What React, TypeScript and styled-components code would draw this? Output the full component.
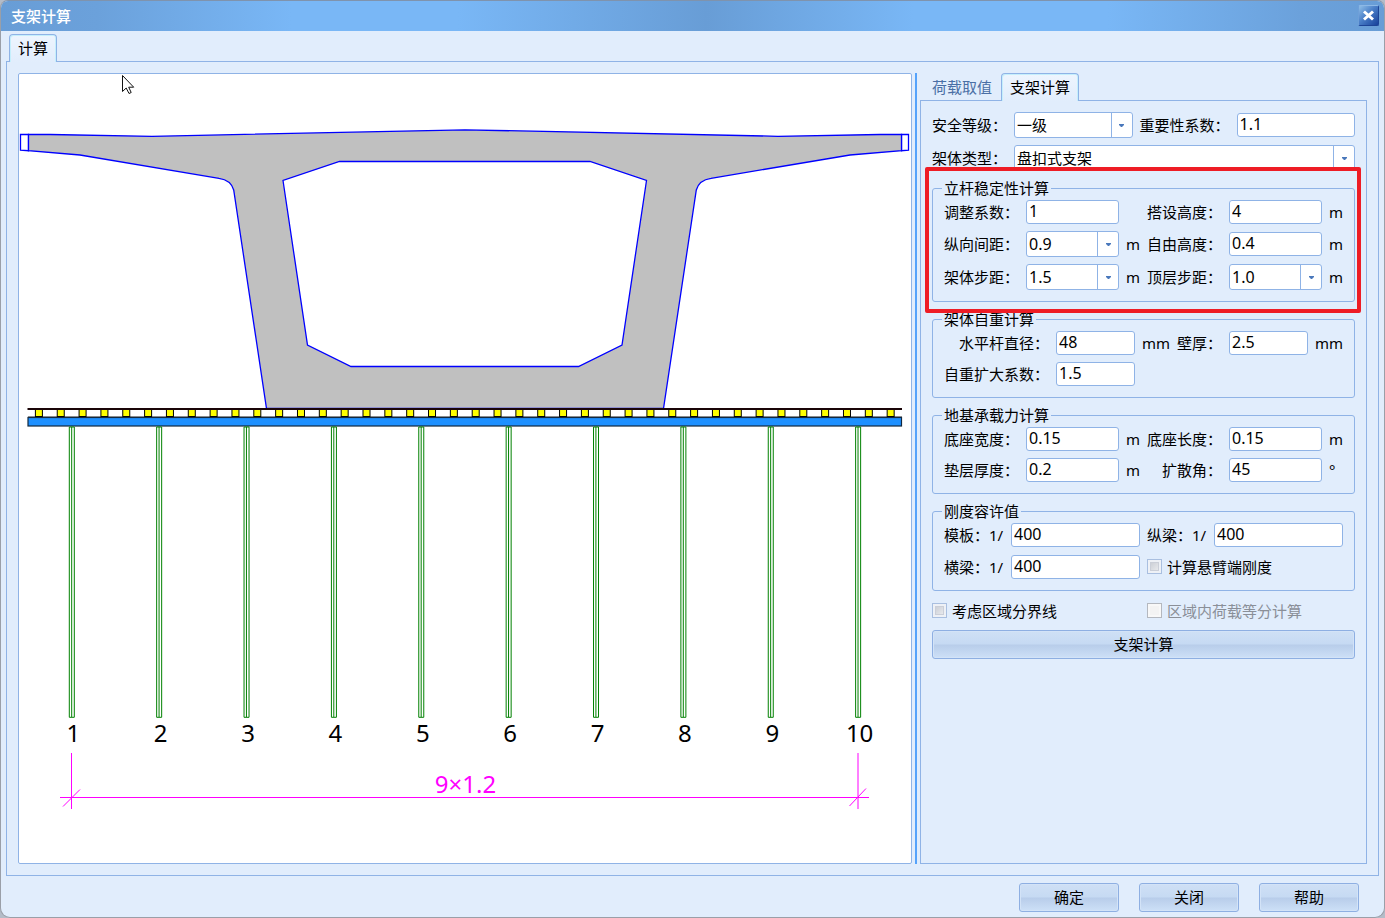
import React, { useState } from "react";
import styled, { createGlobalStyle, css } from "styled-components";

const line = "#8fb3e6";
const surface = "#e1edfc";
const uiFont = `"Noto Sans", "Noto Sans CJK SC", sans-serif`;

const GlobalStyle = createGlobalStyle`
  *, *::before, *::after { box-sizing: border-box; }
  body { margin: 0; background: #b4bcc8; }
  body, button, input, select { font-family: ${uiFont}; font-size: 15px; line-height: 20px; color: #000; }
`;

const Window = styled.div`
  display: flex;
  flex-direction: column;
  min-height: 100vh;
  border: 1px solid #9a9fa8;
  border-top-color: #7f93ad;
  border-radius: 8px 8px 10px 10px;
  background: ${surface};
  overflow: hidden;
`;

const TitleBar = styled.header`
  display: flex;
  align-items: center;
  justify-content: space-between;
  height: 30px;
  padding: 0 5px 1px 10px;
  background: linear-gradient(90deg, #689dd6 0%, #6ba1db 7%, #79b7f6 21%, #79b7f6 33%, #689dd6 51%, #79b7f6 66%, #79b7f6 80%, #6ba1db 94%, #689dd6 100%);
`;

const Title = styled.h1`
  margin: 0;
  font-size: 15px;
  font-weight: 500;
  line-height: 20px;
  color: #fff;
`;

const CloseButton = styled.button`
  display: flex;
  align-items: center;
  justify-content: center;
  width: 21px;
  height: 21px;
  padding: 0;
  border: 1px solid #1d4496;
  border-top-color: #8db8e6;
  border-left-color: #6f9fd8;
  border-radius: 2px;
  background: linear-gradient(135deg, #8fbfe8 0%, #4a7fc8 45%, #17409a 100%);
`;

const TabStrip = styled.div`
  position: relative;
  z-index: 1;
  display: flex;
  align-items: flex-end;
  margin-bottom: -1px;
  padding-left: 3px;
`;

const Tab = styled.button<{ $active?: boolean }>`
  height: 28px;
  padding: 0 8px 2px;
  border: 1px solid transparent;
  border-bottom: 0;
  border-radius: 4px 4px 0 0;
  background: none;
  color: #4a6fa5;
  ${(p) =>
    p.$active &&
    css`
      border-color: ${line};
      background: linear-gradient(#eef5fe, ${surface});
      box-shadow: inset 1px 1px 0 #c5effc, inset -1px 0 0 #c5effc;
      color: #000;
    `}
`;

const Main = styled.main`
  display: flex;
  flex: 1;
  flex-direction: column;
  padding: 3px 5px 7px;
`;

const Workspace = styled.div`
  display: flex;
  flex: 1;
  padding: 11px;
  border: 1px solid ${line};
`;

const Canvas = styled.div`
  display: flex;
  flex: 1;
  min-width: 0;
  border: 1px solid ${line};
  border-radius: 2px;
  background: #fff;
`;

const Drawing = styled.svg`
  display: block;
  width: 100%;
  height: auto;
  font-family: ${uiFont};
  font-size: 24px;
`;

const Splitter = styled.div`
  width: 2px;
  margin: 0 3px;
  background: #55a3fb;
`;

const Side = styled.section`
  display: flex;
  flex: 0 0 447px;
  flex-direction: column;
`;

const Form = styled.form`
  display: flex;
  flex: 1;
  flex-direction: column;
  gap: 7px;
  padding: 11px;
  border: 1px solid ${line};
`;

const Group = styled.fieldset`
  display: flex;
  flex-direction: column;
  min-width: 0;
  margin: 0;
  padding: 2px 11px 11px;
  border: 1px solid ${line};
  border-radius: 3px;
`;

const Legend = styled.legend`
  margin-left: -2px;
  padding: 0 2px;
  line-height: 20px;
`;

const Marked = styled.div`
  position: relative;

  &::after {
    content: "";
    position: absolute;
    z-index: 2;
    inset: -11px -6px -11px -7px;
    border: 4px solid #ee1c25;
    border-radius: 2px;
    pointer-events: none;
  }
`;

const Fields = styled.div<{ $columns: string }>`
  display: grid;
  grid-template-columns: ${(p) => p.$columns};
  row-gap: 7px;
  align-items: center;
`;

const Label = styled.label<{ $start?: boolean }>`
  padding-right: 7px;
  text-align: ${(p) => (p.$start ? "left" : "right")};
  white-space: nowrap;
`;

const Unit = styled.span`
  padding-left: 7px;
`;

const field = css`
  width: 100%;
  min-width: 0;
  border: 1px solid ${line};
  border-radius: 3px;
  background: #fff;
  font-size: 16px;
`;

const TextInput = styled.input`
  ${field}
  height: 24px;
  padding: 0 2px 2px;
`;

const SelectBox = styled.div`
  position: relative;
  display: flex;
`;

const SelectInput = styled.select<{ $cjk?: boolean }>`
  ${field}
  height: 26px;
  padding: 0 24px 0 2px;
  appearance: none;
  font-size: ${(p) => (p.$cjk ? 15 : 16)}px;
`;

const SelectArrow = styled.span`
  position: absolute;
  top: 1px;
  right: 1px;
  bottom: 1px;
  display: flex;
  align-items: center;
  justify-content: center;
  width: 21px;
  border-left: 1px solid ${line};
  pointer-events: none;
`;

const Check = styled.label<{ $muted?: boolean; $span?: boolean }>`
  display: flex;
  align-items: center;
  gap: 5px;
  height: 25px;
  color: ${(p) => (p.$muted ? "#8a8f98" : "#000")};
  ${(p) => p.$span && "grid-column: span 2;"}
`;

const CheckInput = styled.input`
  appearance: none;
  width: 15px;
  height: 15px;
  margin: 0;
  border: 1px solid #a9bfe0;
  background: linear-gradient(135deg, #c2c6ce, #f2f3f5);
  box-shadow: inset 0 0 0 2px #eef1f6, inset 0 0 0 3px #cbcfd8;

  &:checked { background: #3c6eb4; }
  &:disabled {
    border-color: #b4b8bf;
    background: #f3f3f3;
    box-shadow: inset 0 0 0 2px #f8f8f8;
  }
`;

const PushButton = styled.button<{ $wide?: boolean }>`
  width: ${(p) => (p.$wide ? "100%" : "100px")};
  height: 29px;
  padding: 0 0 2px;
  border: 1px solid #8eafe2;
  border-radius: 3px;
  background: linear-gradient(#cfe0f5 0%, #c6daf3 48%, #b8cdea 52%, #cde0f7 100%);
  box-shadow: inset 0 0 0 1px #d3e3f7;
`;

const Footer = styled.footer`
  display: flex;
  justify-content: flex-end;
  gap: 20px;
  padding: 0 25px 5px;
`;

const posts = Array.from({ length: 10 }, (_, i) => 71.7 + i * 87.37);
const blocks = Array.from({ length: 40 }, (_, i) => 38.9 + i * 21.84);

function SectionDrawing() {
  return (
    <Drawing viewBox="19 74 892 789" role="img" aria-label="箱梁支架断面">
      <g stroke="#00f" strokeWidth="1.3">
        <path d="M20.5 134.5H28.5V150.7L20.5 150.2ZM901.5 134.5H908.5V150.2L901.5 150.7Z" fill="#fff" />
        <path
          fill="#c0c0c0"
          fillRule="evenodd"
          d="M28.5 134.5H50L152 136.3L465 129.8L778 136.3L880 134.5H901.5V150.7L850 155L711 178.3Q699 180 696.3 190L663.5 408.5H266.5L233.7 190Q231 180 219 178.3L80 155L28.5 150.7ZM283 180.5L307.5 345L351 366.5H578.5L622 345L646.5 180.5L590 161.5H339.5Z"
        />
      </g>
      <path d="M28 416.5H902" stroke="#999" />
      {blocks.map((x) => (
        <rect key={x} x={x - 3.5} y="409.5" width="7" height="7" fill="#ff0" stroke="#000" />
      ))}
      <path d="M27.5 409H902" stroke="#1a0508" strokeWidth="1.8" />
      <rect x="28" y="417.5" width="873.5" height="8.5" fill="#1e90ff" stroke="#12283f" strokeWidth="1.2" />
      {posts.map((x, i) => (
        <g key={x}>
          <path
            d={`M${x - 2.4} 427V717.3H${x + 2.6}V427ZM${x} 427V717`}
            fill="#fff"
            stroke="#008000"
            strokeWidth="1"
          />
          <text x={x + 1.6} y="742" textAnchor="middle">
            {i + 1}
          </text>
        </g>
      ))}
      <path
        d="M60 797.5H869M71.5 753V809M858 753V809M63 806.5L80 789.5M849.5 806L866 788.5"
        stroke="#f0f"
        fill="none"
      />
      <text x="465.5" y="793" textAnchor="middle" fill="#f0f">
        9×1.2
      </text>
      <path d="M122.5 75.5V91.5L126.2 88L129 93.5L131.2 92.5L128.7 87.2H133.7Z" fill="#fff" stroke="#111" strokeWidth="1" />
    </Drawing>
  );
}

function Text({ id, label, value, start }: { id: string; label: string; value: string; start?: boolean }) {
  return (
    <>
      <Label htmlFor={id} $start={start}>{label}</Label>
      <TextInput id={id} defaultValue={value} />
    </>
  );
}

function Choice({ id, label, options, cjk }: { id: string; label: string; options: string[]; cjk?: boolean }) {
  return (
    <>
      <Label htmlFor={id}>{label}</Label>
      <SelectBox>
        <SelectInput id={id} $cjk={cjk}>
          {options.map((o) => (
            <option key={o}>{o}</option>
          ))}
        </SelectInput>
        <SelectArrow>
          <svg width="5" height="3" viewBox="0 0 5 3" aria-hidden="true">
            <path d="M0 0H5V1L3 3H2L0 1Z" fill="#4a78bb" />
          </svg>
        </SelectArrow>
      </SelectBox>
    </>
  );
}

const pairColumns = "82px minmax(0, 1fr) 28px 82px minmax(0, 1fr) 21px";

export default function App() {
  const [tab, setTab] = useState(1);
  return (
    <Window>
      <GlobalStyle />
      <TitleBar>
        <Title>支架计算</Title>
        <CloseButton aria-label="关闭窗口">
          <svg width="13" height="11" viewBox="0 0 13 11" aria-hidden="true">
            <path d="M2 1.5L11 9.5M11 1.5L2 9.5" stroke="#fff" strokeWidth="3" />
          </svg>
        </CloseButton>
      </TitleBar>
      <Main>
        <TabStrip role="tablist">
          <Tab $active role="tab" aria-selected>计算</Tab>
        </TabStrip>
        <Workspace>
          <Canvas>
            <SectionDrawing />
          </Canvas>
          <Splitter />
          <Side>
            <TabStrip role="tablist">
              {["荷载取值", "支架计算"].map((name, i) => (
                <Tab key={name} role="tab" $active={tab === i} aria-selected={tab === i} onClick={() => setTab(i)}>
                  {name}
                </Tab>
              ))}
            </TabStrip>
            <Form onSubmit={(e) => e.preventDefault()}>
              <Fields $columns="82px minmax(0, 1fr) 7px 97px minmax(0, 1fr)">
                <Choice id="safety" label="安全等级：" options={["一级", "二级"]} cjk />
                <span />
                <Text id="importance" label="重要性系数：" value="1.1" start />
              </Fields>
              <Fields $columns="82px minmax(0, 1fr)">
                <Choice id="frame" label="架体类型：" options={["盘扣式支架", "碗扣式支架"]} cjk />
              </Fields>
              <Marked>
                <Group>
                  <Legend>立杆稳定性计算</Legend>
                  <Fields $columns={pairColumns}>
                    <Text id="adjust" label="调整系数：" value="1" />
                    <span />
                    <Text id="height" label="搭设高度：" value="4" />
                    <Unit>m</Unit>
                    <Choice id="long" label="纵向间距：" options={["0.9", "1.2"]} />
                    <Unit>m</Unit>
                    <Text id="free" label="自由高度：" value="0.4" />
                    <Unit>m</Unit>
                    <Choice id="step" label="架体步距：" options={["1.5", "1.0"]} />
                    <Unit>m</Unit>
                    <Choice id="top" label="顶层步距：" options={["1.0", "0.5"]} />
                    <Unit>m</Unit>
                  </Fields>
                </Group>
              </Marked>
              <Group>
                <Legend>架体自重计算</Legend>
                <Fields $columns="112px minmax(0, 1fr) 42px 52px minmax(0, 1fr) 35px">
                  <Text id="diameter" label="水平杆直径：" value="48" />
                  <Unit>mm</Unit>
                  <Text id="wall" label="壁厚：" value="2.5" />
                  <Unit>mm</Unit>
                  <Text id="weight" label="自重扩大系数：" value="1.5" />
                </Fields>
              </Group>
              <Group>
                <Legend>地基承载力计算</Legend>
                <Fields $columns={pairColumns}>
                  <Text id="baseWidth" label="底座宽度：" value="0.15" />
                  <Unit>m</Unit>
                  <Text id="baseLength" label="底座长度：" value="0.15" />
                  <Unit>m</Unit>
                  <Text id="cushion" label="垫层厚度：" value="0.2" />
                  <Unit>m</Unit>
                  <Text id="spread" label="扩散角：" value="45" />
                  <Unit>°</Unit>
                </Fields>
              </Group>
              <Group>
                <Legend>刚度容许值</Legend>
                <Fields $columns="67px minmax(0, 1fr) 7px 67px minmax(0, 1fr)">
                  <Text id="panel" label="模板：1/" value="400" start />
                  <span />
                  <Text id="longBeam" label="纵梁：1/" value="400" start />
                  <Text id="crossBeam" label="横梁：1/" value="400" start />
                  <span />
                  <Check $span>
                    <CheckInput type="checkbox" />
                    计算悬臂端刚度
                  </Check>
                </Fields>
              </Group>
              <Fields $columns="215px minmax(0, 1fr)">
                <Check>
                  <CheckInput type="checkbox" />
                  考虑区域分界线
                </Check>
                <Check $muted>
                  <CheckInput type="checkbox" disabled />
                  区域内荷载等分计算
                </Check>
              </Fields>
              <PushButton $wide>支架计算</PushButton>
            </Form>
          </Side>
        </Workspace>
      </Main>
      <Footer>
        <PushButton>确定</PushButton>
        <PushButton>关闭</PushButton>
        <PushButton>帮助</PushButton>
      </Footer>
    </Window>
  );
}
